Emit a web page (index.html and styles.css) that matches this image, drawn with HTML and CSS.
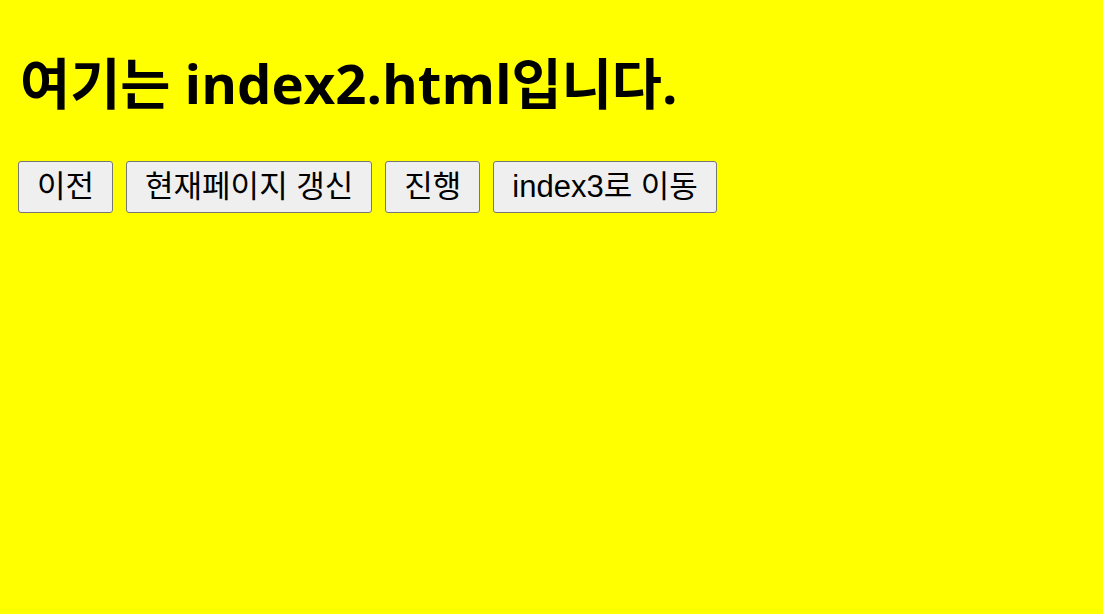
FILE: index.html
```html
<!DOCTYPE html>
<html lang="ko">
<head>
<meta charset="utf-8">
<title>index2</title>
<link rel="stylesheet" href="styles.css">
</head>
<body>
<h1 class="title">여기는 index2.html입니다.</h1>
<div class="actions">
  <button class="btn" type="button">이전</button>
  <button class="btn" type="button">현재페이지 갱신</button>
  <button class="btn" type="button">진행</button>
  <button class="btn" type="button">index3로 이동</button>
</div>
</body>
</html>
```
FILE: styles.css
```css
html, body {
  background: #ffff00;
}
body {
  margin: 0;
  padding: 0 18px;
  font-family: "Liberation Sans", "Noto Sans CJK KR", sans-serif;
}
.title {
  margin: 0;
  padding-top: 47px;
  padding-left: 2px;
  font-family: "Open Sans", "Noto Sans CJK KR", sans-serif;
  font-size: 54.5px;
  font-weight: 700;
  line-height: 72px;
  color: #000;
}
.actions {
  display: flex;
  gap: 13px;
  margin-top: 42px;
}
.btn {
  font-family: "Liberation Sans", "Noto Sans CJK KR", sans-serif;
  font-size: 31px;
  line-height: 40px;
  padding: 5px 18px;
  background: #efefef;
  border: 1px solid #767676;
  border-radius: 3px;
  color: #000;
}
```
